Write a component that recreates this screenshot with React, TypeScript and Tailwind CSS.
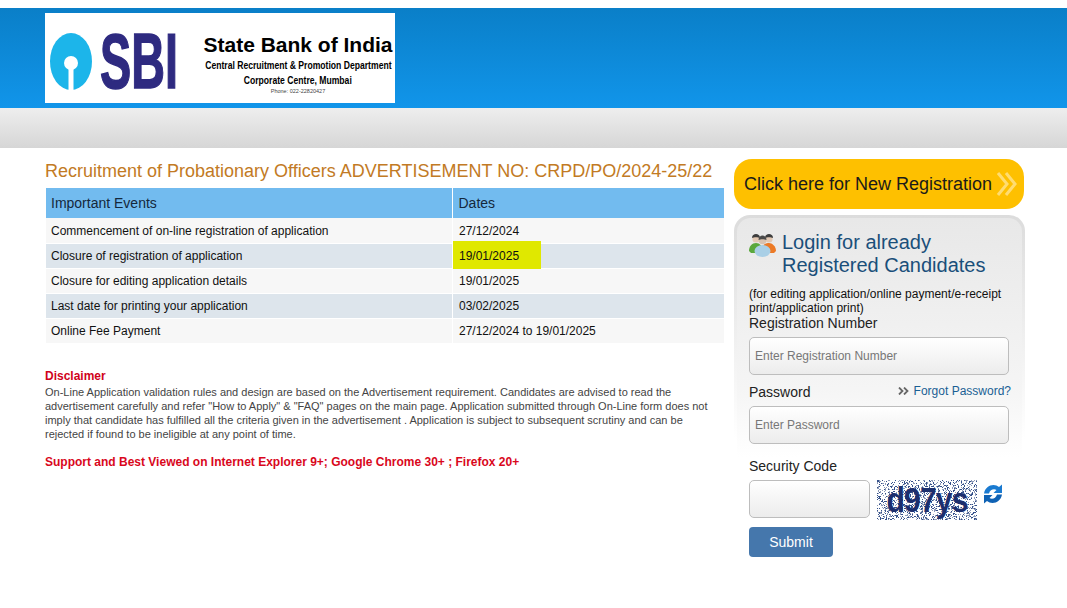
import React from 'react';

const events = [
  { name: 'Commencement of on-line registration of application', date: '27/12/2024' },
  { name: 'Closure of registration of application', date: '19/01/2025', highlight: true },
  { name: 'Closure for editing application details', date: '19/01/2025' },
  { name: 'Last date for printing your application', date: '03/02/2025' },
  { name: 'Online Fee Payment', date: '27/12/2024 to 19/01/2025' },
];

// speckle behind the captcha, fixed seed so that it does not change between renders
const noise: { x: number; y: number; c: string }[] = [];
const rnd = (n: number) => {
  const v = Math.sin(n * 12.9898) * 43758.5453;
  return v - Math.floor(v);
};
for (let i = 0; i < 1700; i++) {
  noise.push({
    x: Math.floor(rnd(i + 1) * 100),
    y: Math.floor(rnd(i + 5001) * 40),
    c: rnd(i + 9001) > 0.5 ? '#34508a' : '#8d9ab8',
  });
}

const Logo = () => (
  <div className="flex h-[90px] w-[350px] shrink-0 items-center bg-white pt-[6px] pl-[5px]">
    <svg width="42" height="57" viewBox="0 0 42 57" className="shrink-0">
      <ellipse cx="21" cy="28.5" rx="21" ry="28.5" fill="#1cb5ea" />
      <circle cx="21" cy="30" r="7" fill="#fff" />
      <rect x="18.5" y="33" width="5" height="24" fill="#fff" />
    </svg>
    <div className="ml-[8px] w-[80px] origin-left scale-x-[0.6] text-[78px] leading-none font-bold whitespace-nowrap text-[#2e2a80] [-webkit-text-stroke:1.5px_#2e2a80]">
      SBI
    </div>
    <div className="mt-[5px] ml-[24px] flex w-[188px] flex-col items-center text-black">
      <div className="text-[21px] leading-[24px] font-bold whitespace-nowrap">State Bank of India</div>
      <div className="mt-[2px] scale-x-[0.86] text-[10px] leading-[14px] font-bold whitespace-nowrap">Central Recruitment &amp; Promotion Department</div>
      <div className="scale-x-[0.86] text-[10px] leading-[15px] font-bold whitespace-nowrap">Corporate Centre, Mumbai</div>
      <div className="text-[5.5px] leading-[6px] whitespace-nowrap text-[#444]">Phone: 022-22820427</div>
    </div>
  </div>
);

const PeopleIcon = () => (
  <svg width="27" height="24" viewBox="0 0 27 24" className="mt-[2px] shrink-0">
    <circle cx="7" cy="6" r="3.6" fill="#e3c9b4" />
    <path d="M3 5c0-3 2-4 4-4s4 1 4 4c-2-1-6-1-8 0z" fill="#3d3d3d" />
    <circle cx="20" cy="6" r="3.6" fill="#e3c9b4" />
    <path d="M16 5c0-3 2-4 4-4s4 1 4 4c-2-1-6-1-8 0z" fill="#3d3d3d" />
    <path d="M0 18c0-5 3-8 7-8s6 3 6 7l-3 3H2z" fill="#5aa83c" />
    <path d="M14 14c0-3 3-4 6-4s7 3 7 8l-2 2h-9z" fill="#ec7a26" />
    <circle cx="13.5" cy="7.5" r="3.8" fill="#d8c2b0" />
    <path d="M9.5 7c0-3 2-4.5 4-4.5s4 1.5 4 4.5c-2-1-6-1-8 0z" fill="#4a4a4a" />
    <ellipse cx="13.5" cy="18" rx="8" ry="6" fill="#a9cfe6" />
  </svg>
);

const RefreshIcon = () => (
  <svg width="20" height="20" viewBox="0 0 20 20" className="mt-[4px] ml-[6px] shrink-0">
    <path d="M1 9.5C2 4 6 1 10.5 1c2 0 4 .8 5.5 2l3-2.500V9h-8.500l3-3C11 4.500 7 5.500 6 9.500z" fill="#1a7ad0" />
    <path d="M19 10.500c-1 5.500-5 8.500-9.500 8.500-2 0-4-.8-5.500-2l-3 2.500V11h8.500l-3 3c2.500 1.500 6.500.5 7.500-3.500z" fill="#0f62b4" />
  </svg>
);

const TextInput = ({ placeholder, className }: { placeholder?: string; className: string }) => (
  <input
    type="text"
    placeholder={placeholder}
    className={`h-[38px] rounded-[5px] border border-[#bdbdbd] bg-gradient-to-b from-white to-[#ececec] px-[5px] text-[12px] outline-none placeholder:text-[#777] ${className}`}
  />
);

const App = () => {
  return (
    <div className="h-[608px] w-[1067px] overflow-hidden bg-white font-['Liberation_Sans',Arial,sans-serif]">
      {/* Header */}
      <div className="mt-[8px] h-[100px] bg-gradient-to-b from-[#0a7fc8] to-[#1195ea] pt-[5px] pl-[45px]">
        <Logo />
      </div>
      <div className="h-[40px] bg-gradient-to-b from-[#eeeeee] to-[#d6d6d6]" />

      <div className="flex pl-[45px]">
        {/* Left column */}
        <div className="w-[679px] shrink-0 pt-[12px]">
          <h1 className="text-[18px] leading-[22px] whitespace-nowrap text-[#c27a24]">
            Recruitment of Probationary Officers ADVERTISEMENT NO: CRPD/PO/2024-25/22
          </h1>
          <table className="mt-[6px] ml-[1px] w-[678px] border-collapse text-[12px] text-[#111]">
            <thead>
              <tr className="h-[30px] bg-[#72bbef] text-left text-[14px] text-[#14283c]">
                <th className="w-[406px] border-r border-white pl-[5px] font-normal">Important Events</th>
                <th className="pl-[6px] font-normal">Dates</th>
              </tr>
            </thead>
            <tbody>
              {events.map((row, i) => (
                <tr key={row.name} className={`h-[25px] border-b border-white ${i % 2 === 0 ? 'bg-[#f7f7f7]' : 'bg-[#dde5ec]'}`}>
                  <td className={`border-r border-white pl-[5px] ${i === 0 ? 'pt-[2px]' : ''}`}>{row.name}</td>
                  <td className={`relative pl-[6.5px] ${i === 0 ? 'pt-[2px]' : ''}`}>
                    {row.highlight && <div className="absolute top-[-3px] left-0 h-[28px] w-[88px] bg-[#e0e800]" />}
                    <span className="relative">{row.date}</span>
                  </td>
                </tr>
              ))}
            </tbody>
          </table>

          <h2 className="mt-[25px] text-[12px] leading-[14px] font-bold text-[#d0021b]">Disclaimer</h2>
          <p className="mt-[2px] w-[670px] text-[11px] leading-[14px] text-[#444]">
            On-Line Application validation rules and design are based on the Advertisement requirement. Candidates are advised to read the advertisement carefully and refer &quot;How to Apply&quot; &amp; &quot;FAQ&quot; pages on the main page. Application submitted through On-Line form does not imply that candidate has fulfilled all the criteria given in the advertisement . Application is subject to subsequent scrutiny and can be rejected if found to be ineligible at any point of time.
          </p>
          <p className="mt-[14px] text-[12px] leading-[14px] font-bold text-[#d9071c]">
            Support and Best Viewed on Internet Explorer 9+; Google Chrome 30+ ; Firefox 20+
          </p>
        </div>

        {/* Right column */}
        <div className="ml-[10px] w-[291px] shrink-0 pt-[11px]">
          <a className="flex h-[50px] w-[290px] items-center rounded-[18px] bg-[#fec000] pl-[10px] text-[18px] whitespace-nowrap text-[#1a1a1a]">
            Click here for New Registration
            <svg width="22" height="24" viewBox="0 0 22 24" fill="none" stroke="#ffdc70" strokeWidth="3" className="ml-[4px]">
              <path d="M2 1l9 11-9 11M10 1l9 11-9 11" />
            </svg>
          </a>

          {/* Login panel, its ring fades out along with the fill */}
          <div className="mt-[6px] rounded-[16px] bg-gradient-to-b from-[#dcdcdc] via-[#f2f2f2] via-40% to-white to-65% px-[3px] pt-[3px]">
            <div className="h-[342px] rounded-[14px] bg-gradient-to-b from-[#e8e8e8] via-[#f5f5f5] via-50% to-white to-70% pt-[13px] pl-[12px]">
              <div className="flex">
                <PeopleIcon />
                <h3 className="ml-[6px] text-[20px] leading-[23px] text-[#1a4f7a]">
                  Login for already
                  <br />
                  Registered Candidates
                </h3>
              </div>
              <p className="mt-[10px] w-[262px] text-[12px] leading-[14px] text-[#111]">
                (for editing application/online payment/e-receipt print/application print)
              </p>
              <label className="block text-[14px] leading-[16px] text-[#222]">Registration Number</label>
              <TextInput placeholder="Enter Registration Number" className="mt-[6px] block w-[260px]" />

              <div className="mt-[9px] flex w-[262px] items-center justify-between">
                <label className="text-[14px] leading-[16px] text-[#222]">Password</label>
                <a className="-mt-[2px] flex items-center text-[12px] leading-[14px] text-[#1a5f94]">
                  <svg width="11" height="8" viewBox="0 0 11 8" fill="none" stroke="#666" strokeWidth="1.8" className="mr-[5px]">
                    <path d="M1 .5l3.5 3.5-3.5 3.5M6 .5l3.5 3.5-3.5 3.5" />
                  </svg>
                  Forgot Password?
                </a>
              </div>
              <TextInput placeholder="Enter Password" className="mt-[6px] block w-[260px]" />

              <label className="mt-[14px] block text-[14px] leading-[16px] text-[#222]">Security Code</label>
              <div className="mt-[6px] flex">
                <TextInput className="w-[121px]" />
                <div className="relative ml-[7px] h-[40px] w-[100px] overflow-hidden bg-white">
                  <svg width="100" height="40" className="absolute inset-0">
                    {noise.map((p, i) => (
                      <rect key={i} x={p.x} y={p.y} width="1" height="1" fill={p.c} />
                    ))}
                  </svg>
                  <div className="absolute inset-0 flex scale-x-[0.86] items-center justify-center text-[35px] font-bold tracking-[-1px] text-[#1c2f6e]">d97ys</div>
                </div>
                <RefreshIcon />
              </div>
              <button className="mt-[7px] block h-[30px] w-[84px] rounded-[4px] bg-[#4577ac] text-[14px] text-white">Submit</button>
            </div>
          </div>
        </div>
      </div>
    </div>
  );
};

export default App;
